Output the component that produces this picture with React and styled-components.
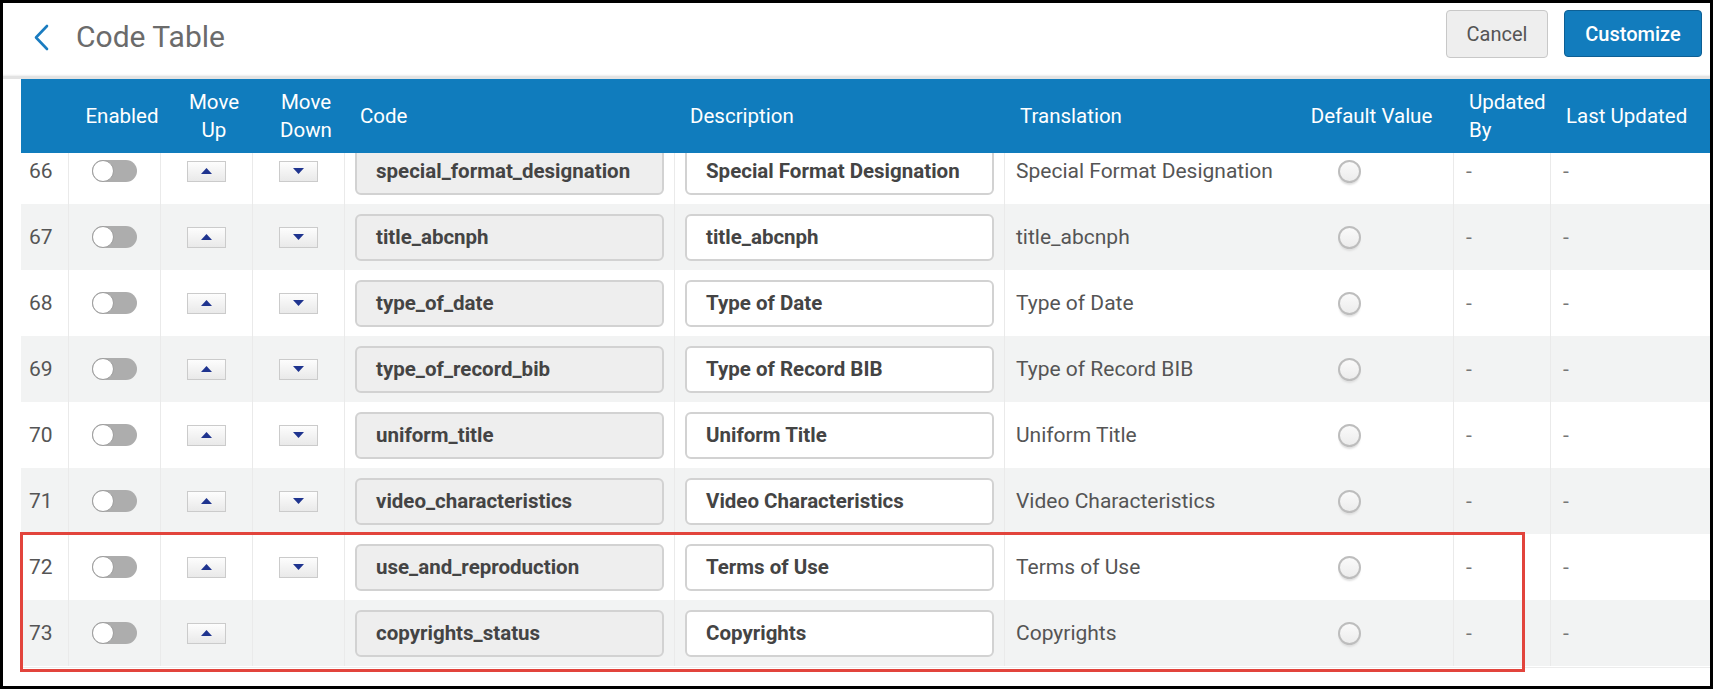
import React from 'react';
import styled, { createGlobalStyle } from 'styled-components';

const GlobalStyle = createGlobalStyle`
    html, body {
        margin: 0;
        padding: 0;
        background: #fff;
    }
    body {
        font-family: Roboto, "Liberation Sans", Arial, sans-serif;
    }
`;

const COLUMNS = '47px 92px 92px 92px 330px 330px 286px 163px 97px 160px';

const rows = [
    { num: 66, code: 'special_format_designation', desc: 'Special Format Designation' },
    { num: 67, code: 'title_abcnph', desc: 'title_abcnph' },
    { num: 68, code: 'type_of_date', desc: 'Type of Date' },
    { num: 69, code: 'type_of_record_bib', desc: 'Type of Record BIB' },
    { num: 70, code: 'uniform_title', desc: 'Uniform Title' },
    { num: 71, code: 'video_characteristics', desc: 'Video Characteristics' },
    { num: 72, code: 'use_and_reproduction', desc: 'Terms of Use' },
    { num: 73, code: 'copyrights_status', desc: 'Copyrights', noDown: true },
];

const App = () => {
    return (
        <Frame>
            <GlobalStyle />
            <TopBar>
                <BackButton aria-label='back'>
                    <svg width='16' height='27' viewBox='0 0 16 27'>
                        <path d='M14 2 L3 13.5 L14 25' fill='none' stroke='#1a7cc0' strokeWidth='2.6' strokeLinecap='round' strokeLinejoin='round' />
                    </svg>
                </BackButton>
                <Title>Code Table</Title>
                <Actions>
                    <CancelButton>Cancel</CancelButton>
                    <PrimaryButton>Customize</PrimaryButton>
                </Actions>
            </TopBar>
            <Content>
                <HeaderRow>
                    <HeaderCell />
                    <HeaderCell $center>Enabled</HeaderCell>
                    <HeaderCell $center>Move<br />Up</HeaderCell>
                    <HeaderCell $center>Move<br />Down</HeaderCell>
                    <HeaderCell>Code</HeaderCell>
                    <HeaderCell>Description</HeaderCell>
                    <HeaderCell>Translation</HeaderCell>
                    <HeaderCell $center $flush>Default Value</HeaderCell>
                    <HeaderCell>Updated<br />By</HeaderCell>
                    <HeaderCell>Last Updated</HeaderCell>
                </HeaderRow>
                <Body>
                    <Scroller>
                        {rows.map((row, i) =>
                            <Row key={row.num} $striped={i % 2 === 1}>
                                <NumCell>{row.num}</NumCell>
                                <Cell $center>
                                    <Toggle><Knob /></Toggle>
                                </Cell>
                                <Cell $center>
                                    <MoveButton>
                                        <svg width='11' height='6' viewBox='0 0 11 6'><path d='M5.5 0 L11 6 L0 6 Z' fill='#1f348f' /></svg>
                                    </MoveButton>
                                </Cell>
                                <Cell $center>
                                    {!row.noDown &&
                                        <MoveButton>
                                            <svg width='11' height='6' viewBox='0 0 11 6'><path d='M0 0 L11 0 L5.5 6 Z' fill='#1f348f' /></svg>
                                        </MoveButton>
                                    }
                                </Cell>
                                <InputCell>
                                    <Field $readOnly>{row.code}</Field>
                                </InputCell>
                                <InputCell>
                                    <Field>{row.desc}</Field>
                                </InputCell>
                                <TextCell>{row.desc}</TextCell>
                                <RadioCell $flush>
                                    <Radio />
                                </RadioCell>
                                <TextCell $dim>-</TextCell>
                                <TextCell $dim>-</TextCell>
                            </Row>
                        )}
                    </Scroller>
                </Body>
            </Content>
            <Highlight />
        </Frame>
    );
};

const Frame = styled.div`
    position: relative;
    width: 1713px;
    height: 689px;
    box-sizing: border-box;
    border: 3px solid #000;
    background: #fff;
    overflow: hidden;
`;

const TopBar = styled.div`
    display: flex;
    align-items: flex-start;
    height: 76px;
    box-sizing: border-box;
    padding: 7px 8px 0 30px;
    border-bottom: 3px solid #e3e3e3;
    box-shadow: inset 0 -2px 2px -1px #eeeeee;
`;

const BackButton = styled.div`
    display: flex;
    margin-top: 14px;
    width: 16px;
    height: 27px;
`;

const Title = styled.h1`
    margin: 3px 0 0 27px;
    font-size: 30px;
    line-height: 47px;
    font-weight: 400;
    color: #6b6b6b;
`;

const Actions = styled.div`
    display: flex;
    gap: 16px;
    margin-left: auto;
`;

const CancelButton = styled.button`
    width: 102px;
    height: 48px;
    border: 1px solid #c8c8c8;
    border-radius: 4px;
    background: #eeeeee;
    color: #555;
    font-family: inherit;
    font-size: 20px;
`;

const PrimaryButton = styled.button`
    width: 138px;
    height: 47px;
    border: 1px solid #0d5f94;
    border-radius: 4px;
    background: #127cbd;
    color: #fff;
    font-family: inherit;
    font-size: 20px;
    font-weight: 500;
`;

const Content = styled.div`
    padding-left: 18px;
`;

const HeaderRow = styled.div`
    display: grid;
    grid-template-columns: ${COLUMNS};
    height: 74px;
    background: #107cbd;
    color: #fff;
    font-size: 20.5px;
    line-height: 28px;
`;

const HeaderCell = styled.div`
    display: flex;
    align-items: center;
    justify-content: ${props => props.$center ? 'center' : 'flex-start'};
    text-align: ${props => props.$center ? 'center' : 'left'};
    padding-left: ${props => props.$flush ? '0' : '16px'};
`;

const Body = styled.div`
    height: 514px;
    overflow: hidden;
    border-bottom: 1px solid #ececec;
`;

const Scroller = styled.div`
    margin-top: -15px;
`;

const Row = styled.div`
    display: grid;
    grid-template-columns: ${COLUMNS};
    height: 66px;
    background: ${props => props.$striped ? '#f2f3f3' : '#fff'};
`;

const Cell = styled.div`
    display: flex;
    align-items: center;
    justify-content: ${props => props.$center ? 'center' : 'flex-start'};
    border-left: 1px solid #eaeaea;
`;

const NumCell = styled.div`
    display: flex;
    align-items: center;
    padding-left: 8px;
    font-size: 21px;
    color: #555;
`;

const InputCell = styled(Cell)`
    padding: 0 10px;
`;

const TextCell = styled(Cell)`
    padding-left: ${props => props.$dim ? '12px' : '11px'};
    font-size: 21px;
    color: ${props => props.$dim ? '#777' : '#555'};
`;

const RadioCell = styled(Cell)`
    border-left: none;
    padding-left: 48px;
`;

const Toggle = styled.div`
    position: relative;
    width: 45px;
    height: 22px;
    border-radius: 11px;
    background: #adadad;
`;

const Knob = styled.div`
    position: absolute;
    left: 0;
    top: 0;
    width: 20px;
    height: 20px;
    border-radius: 50%;
    background: #fff;
    border: 1px solid #9d9d9d;
`;

const MoveButton = styled.div`
    display: flex;
    align-items: center;
    justify-content: center;
    width: 39px;
    height: 21px;
    box-sizing: border-box;
    border: 1px solid #cbcbcb;
    background: linear-gradient(#fdfdfd, #e9e9e9);
`;

const Field = styled.div`
    display: flex;
    align-items: center;
    width: 100%;
    height: 47px;
    box-sizing: border-box;
    padding-left: 19px;
    border: 2px solid #d2d2d2;
    border-radius: 6px;
    background: ${props => props.$readOnly ? '#eeeeee' : '#fff'};
    color: #444;
    font-size: 20.5px;
    font-weight: 700;
`;

const Radio = styled.div`
    width: 23px;
    height: 23px;
    box-sizing: border-box;
    border-radius: 50%;
    border: 2px solid #bdbdbd;
    background: linear-gradient(#fafafa, #ececec);
    box-shadow: 0 3px 2px -1px #dddddd;
`;

const Highlight = styled.div`
    position: absolute;
    left: 17px;
    top: 529px;
    width: 1505px;
    height: 140px;
    box-sizing: border-box;
    border: 3px solid #e2443c;
    pointer-events: none;
`;

export default App;
